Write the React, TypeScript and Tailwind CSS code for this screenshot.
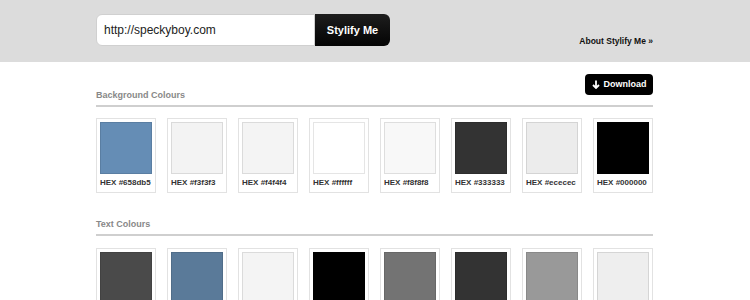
import React from "react";

const bg = ["#658db5", "#f3f3f3", "#f4f4f4", "#ffffff", "#f8f8f8", "#333333", "#ececec", "#000000"];
const txt = ["#4a4a4a", "#5a7a99", "#f4f4f4", "#000000", "#737373", "#333333", "#999999", "#eeeeee"];

function Card({ c }: { c: string }) {
  return (
    <div className="w-[60px] border border-[#e2e2e2] bg-white p-[3px] pb-0">
      <div className="h-[52px] w-[52px] border border-black/10" style={{ backgroundColor: c }} />
      <div className="pt-[4px] pb-[4px] text-[8px] font-bold leading-[10px] text-[#333] whitespace-nowrap">
        HEX {c}
      </div>
    </div>
  );
}

export default function App() {
  return (
    <div className="w-[750px] h-[300px] overflow-hidden bg-white" style={{ fontFamily: '"Liberation Sans", Arial, sans-serif' }}>
      <div className="h-[62px] bg-[#dcdcdc] flex items-start">
        <div className="w-[557px] ml-[96px] flex justify-between">
          <div className="mt-[14px] flex h-[32px]">
            <div className="w-[219px] rounded-l-[6px] border border-[#d0d0d0] bg-white flex items-center pl-[7px] text-[12px] text-[#222]">
              http://speckyboy.com
            </div>
            <div className="w-[75px] rounded-r-[6px] bg-gradient-to-b from-[#1e1e1e] to-[#050505] flex items-center justify-center text-[11px] font-bold text-white">
              Stylify Me
            </div>
          </div>
          <div className="mt-[35px] text-[8.5px] font-bold text-[#111]">About Stylify Me »</div>
        </div>
      </div>
      <div className="w-[557px] ml-[96px]">
        <div className="flex justify-end mt-[12px]">
          <div className="h-[21px] w-[68px] rounded-[4px] bg-black flex items-center justify-center gap-[4px] text-[9px] font-bold text-white">
            <svg width="8" height="9" viewBox="0 0 8 9" fill="none" stroke="white" strokeWidth="1.8">
              <path d="M4 0.5V8M1 5l3 3 3-3" />
            </svg>
            Download
          </div>
        </div>
        <div className="text-[9px] font-bold text-[#888] -mt-[5px] leading-[11px]">Background Colours</div>
        <div className="h-[2px] bg-[#cfcfcf] mt-[4px]" />
        <div className="flex gap-[11px] mt-[11px]">
          {bg.map((c, i) => (
            <Card key={i} c={c} />
          ))}
        </div>
        <div className="text-[9px] font-bold text-[#888] mt-[26px] leading-[11px]">Text Colours</div>
        <div className="h-[2px] bg-[#cfcfcf] mt-[4px]" />
        <div className="flex gap-[11px] mt-[12px]">
          {txt.map((c, i) => (
            <Card key={i} c={c} />
          ))}
        </div>
      </div>
    </div>
  );
}
